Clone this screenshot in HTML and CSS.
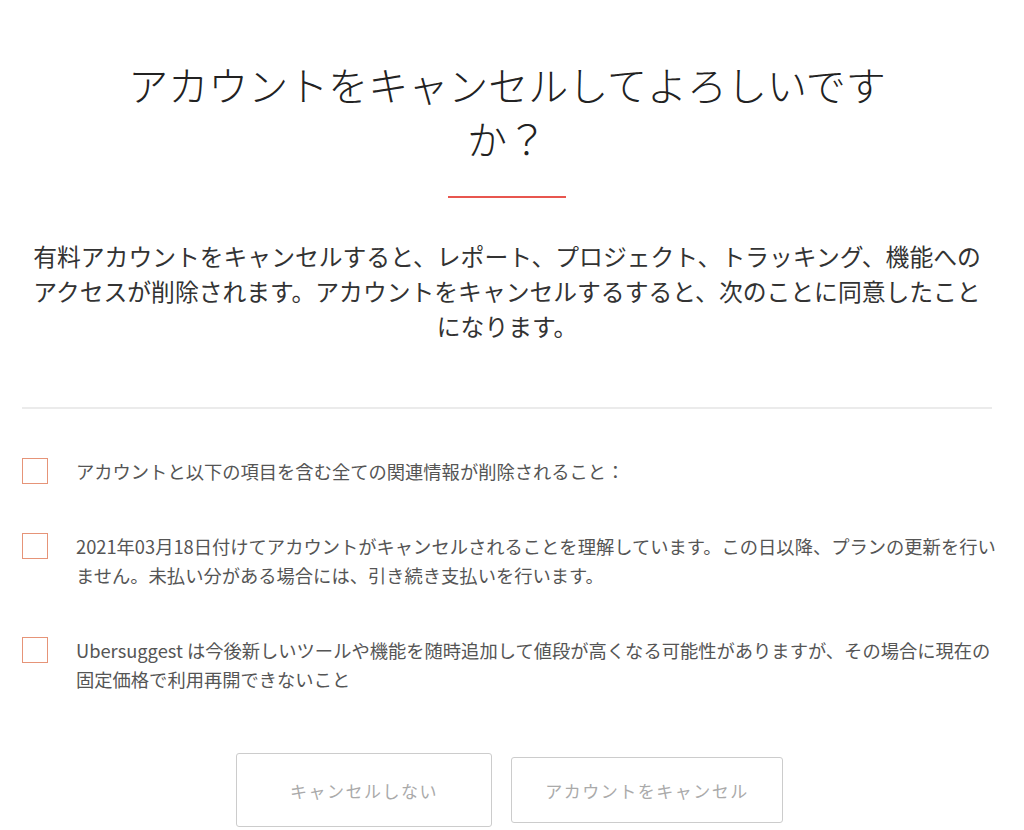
FILE: index.html
```html
<!DOCTYPE html>
<html lang="ja">
<head>
<meta charset="UTF-8" />
<meta name="viewport" content="width=device-width, initial-scale=1.0">
<title>アカウントのキャンセル</title>
<link rel="stylesheet" href="styles.css">
</head>
<body>

<main class="cancel">
  <h1 class="cancel-title">アカウントをキャンセルしてよろしいですか？</h1>
  <div class="accent-line"></div>
  <p class="cancel-lead">有料アカウントをキャンセルすると、レポート、プロジェクト、トラッキング、機能へのアクセスが削除されます。アカウントをキャンセルするすると、次のことに同意したことになります。</p>

  <hr class="divider">

  <!-- agreement checkboxes -->
  <ul class="agree-list">
    <li class="agree-item">
      <span class="check-box"></span>
      <span class="agree-text">アカウントと以下の項目を含む全ての関連情報が削除されること：</span>
    </li>
    <li class="agree-item">
      <span class="check-box"></span>
      <span class="agree-text">2021年03月18日付けてアカウントがキャンセルされることを理解しています。この日以降、プランの更新を行いません。未払い分がある場合には、引き続き支払いを行います。</span>
    </li>
    <li class="agree-item">
      <span class="check-box"></span>
      <span class="agree-text">Ubersuggest は今後新しいツールや機能を随時追加して値段が高くなる可能性がありますが、その場合に現在の固定価格で利用再開できないこと</span>
    </li>
  </ul>

  <div class="actions">
    <button class="btn btn-keep">キャンセルしない</button>
    <button class="btn btn-cancel">アカウントをキャンセル</button>
  </div>
</main>

</body>
</html>
```

FILE: styles.css
```css
/* Base styles */
body {
  font-family: "Noto Sans CJK JP", "Noto Sans", sans-serif;
  margin: 0;
  padding: 0;
  background: #fff;
  color: #333;
}

.cancel {
  padding: 57px 32px 0 22px;
}

.cancel-title {
  max-width: 780px;
  margin: 0 auto;
  text-align: center;
  font-size: 40px;
  font-weight: 300;
  line-height: 54px;
  color: #222;
}

.accent-line {
  width: 118px;
  height: 2px;
  margin: 31px auto 0;
  background: #e8564f;
}

.cancel-lead {
  margin: 40px 0 0;
  text-align: center;
  font-size: 23.8px;
  line-height: 35px;
  color: #333;
}

.divider {
  margin: 64px 0 0;
  border: none;
  border-top: 2px solid #ebebeb;
}

/* Agreement list */
.agree-list {
  list-style: none;
  margin: 48px -10px 0 0;
  padding: 0;
  display: flex;
  flex-direction: column;
  gap: 46px;
}

.agree-item {
  display: flex;
  align-items: flex-start;
  gap: 28px;
}

.check-box {
  flex: none;
  width: 24px;
  height: 24px;
  border: 1px solid #e69478;
  margin-top: 1px;
}

.agree-text {
  font-size: 18.3px;
  line-height: 29px;
  color: #555;
}

/* Buttons */
.actions {
  display: flex;
  justify-content: center;
  align-items: center;
  gap: 19px;
  margin-top: 59px;
  padding-left: 5px;
}

.btn {
  font-family: inherit;
  font-size: 17px;
  color: #aaa;
  background: #fff;
  border: 1px solid #ccc;
  border-radius: 3px;
  cursor: pointer;
  letter-spacing: 1.5px;
}

.btn-keep {
  width: 256px;
  height: 74px;
}

.btn-cancel {
  width: 272px;
  height: 66px;
}
```
